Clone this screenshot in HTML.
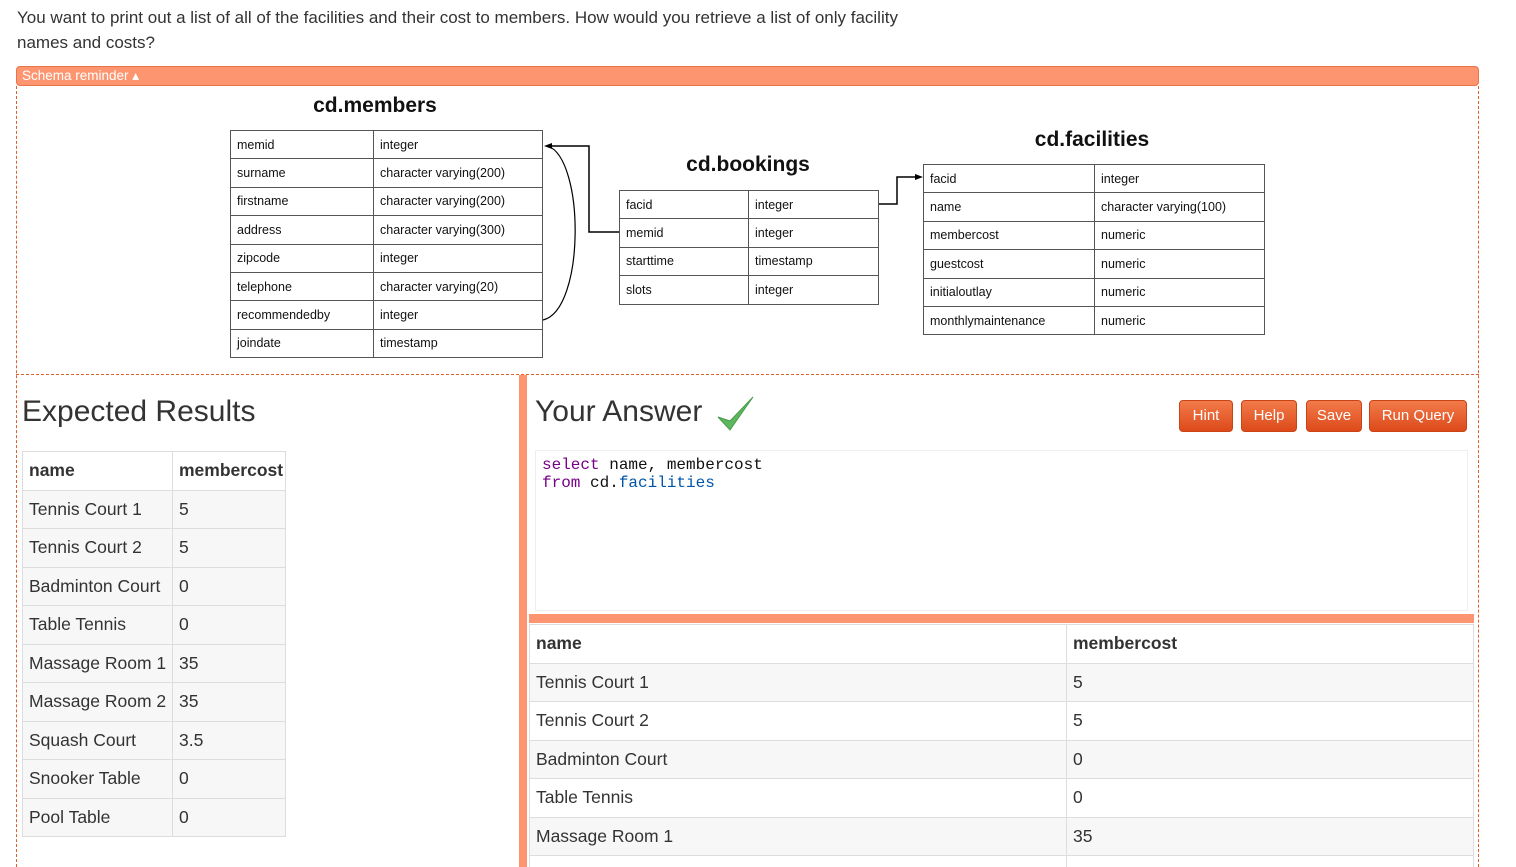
<!DOCTYPE html>
<html style="height:867px;overflow:hidden"><head><meta charset="utf-8"><style>
*{box-sizing:border-box}
body{margin:0;width:1516px;height:867px;overflow:hidden;background:#fff;font-family:"Liberation Sans",sans-serif;color:#333;position:relative}
.a{position:absolute}
.q{left:17px;top:5px;font-size:17px;line-height:25px;color:#333;width:915px}
.bar{left:16px;top:66px;width:1463px;height:20px;background:#fd9670;border:1px solid #e8744a;border-radius:4px;color:#fff;font-size:13.5px;line-height:18px;padding-left:5px}
.box{left:16px;top:86px;width:1463px;height:781px;border-left:1px dashed #e0602c;border-right:1px dashed #e0602c}
.div{left:16px;top:374px;width:1463px;border-top:1px dashed #e0602c}
table.s{position:absolute;border-collapse:collapse;font-size:12.5px;color:#111;table-layout:fixed}
table.s td{border:1px solid #555;padding:0 6px;height:28.4px;white-space:nowrap}
.t{font-weight:bold;font-size:21px;color:#111;text-align:center}
table.r{position:absolute;border-collapse:collapse;font-size:17.5px;color:#333;table-layout:fixed}
table.r td{border:1px solid #ddd;padding:0 6px;height:38.5px;white-space:nowrap;overflow:hidden}
table.r tr.h td{font-weight:bold;background:#fff}
h2{position:absolute;margin:0;font-weight:normal;font-size:30px;color:#333}
.btn{position:absolute;top:400px;height:32px;background:linear-gradient(#f27a4a,#dd4a1a);border:1px solid #c94316;border-radius:4px;color:#fff;font-size:15px;line-height:30px;text-align:center}
</style></head><body>
<div class="a q">You want to print out a list of all of the facilities and their cost to members. How would you retrieve a list of only facility names and costs?</div>
<div class="a bar">Schema reminder ▴</div>
<div class="a box"></div>
<div class="a div"></div>

<div class="a t" style="left:275px;top:94px;width:200px">cd.members</div>
<table class="s" style="left:230px;top:130px;width:313px">
<tr><td style="width:143px">memid</td><td>integer</td></tr>
<tr><td>surname</td><td>character varying(200)</td></tr>
<tr><td>firstname</td><td>character varying(200)</td></tr>
<tr><td>address</td><td>character varying(300)</td></tr>
<tr><td>zipcode</td><td>integer</td></tr>
<tr><td>telephone</td><td>character varying(20)</td></tr>
<tr><td>recommendedby</td><td>integer</td></tr>
<tr><td>joindate</td><td>timestamp</td></tr>
</table>
<div class="a t" style="left:648px;top:153px;width:200px">cd.bookings</div>
<table class="s" style="left:619px;top:190px;width:260px">
<tr><td style="width:129px">facid</td><td>integer</td></tr>
<tr><td>memid</td><td>integer</td></tr>
<tr><td>starttime</td><td>timestamp</td></tr>
<tr><td>slots</td><td>integer</td></tr>
</table>
<div class="a t" style="left:992px;top:128px;width:200px">cd.facilities</div>
<table class="s" style="left:923px;top:164px;width:342px">
<tr><td style="width:171px">facid</td><td>integer</td></tr>
<tr><td>name</td><td>character varying(100)</td></tr>
<tr><td>membercost</td><td>numeric</td></tr>
<tr><td>guestcost</td><td>numeric</td></tr>
<tr><td>initialoutlay</td><td>numeric</td></tr>
<tr><td>monthlymaintenance</td><td>numeric</td></tr>
</table>
<svg class="a" style="left:0;top:0" width="1516" height="400">
<path d="M619 232 H589 V146 H550" fill="none" stroke="#000" stroke-width="1.5"/>
<path d="M544 146 l8 -3 v6z" fill="#000"/>
<path d="M543 320 C585 310 585 160 548 146" fill="none" stroke="#000" stroke-width="1.2"/>
<path d="M879 204 H897 V177 H917" fill="none" stroke="#000" stroke-width="1.5"/>
<path d="M923 177 l-8 -3 v6z" fill="#000"/>
</svg>

<h2 style="left:22px;top:395px">Expected Results</h2>
<table class="r" style="left:22px;top:451px;width:264px">
<tr class="h"><td style="width:150px">name</td><td>membercost</td></tr>
<tr style="background:#f7f7f7"><td>Tennis Court 1</td><td>5</td></tr>
<tr style="background:#f7f7f7"><td>Tennis Court 2</td><td>5</td></tr>
<tr style="background:#f7f7f7"><td>Badminton Court</td><td>0</td></tr>
<tr style="background:#f7f7f7"><td>Table Tennis</td><td>0</td></tr>
<tr style="background:#f7f7f7"><td>Massage Room 1</td><td>35</td></tr>
<tr style="background:#f7f7f7"><td>Massage Room 2</td><td>35</td></tr>
<tr style="background:#f7f7f7"><td>Squash Court</td><td>3.5</td></tr>
<tr style="background:#f7f7f7"><td>Snooker Table</td><td>0</td></tr>
<tr style="background:#f7f7f7"><td>Pool Table</td><td>0</td></tr>
</table>

<div class="a" style="left:519px;top:375px;width:8px;height:492px;background:#fd9670"></div>

<h2 style="left:535px;top:395px">Your Answer</h2>
<svg class="a" style="left:716px;top:395px" width="40" height="38"><path d="M2 22 L14 35 L37 2 L14 26 Z" fill="#5cb85c" stroke="#4a9a4a" stroke-width="1"/></svg>
<div class="btn" style="left:1179px;width:54px">Hint</div>
<div class="btn" style="left:1241px;width:56px">Help</div>
<div class="btn" style="left:1306px;width:56px">Save</div>
<div class="btn" style="left:1369px;width:98px">Run Query</div>

<div class="a" style="left:535px;top:450px;width:933px;height:161px;border:1px solid #eee;padding:5px 6px;font-family:'Liberation Mono',monospace;font-size:16px;line-height:18px;color:#111"><span style="color:#708">select</span> name, membercost<br><span style="color:#708">from</span> cd.<span style="color:#05a">facilities</span></div>
<div class="a" style="left:529px;top:614px;width:945px;height:9px;background:#fd9670"></div>
<table class="r" style="left:529px;top:624px;width:945px">
<tr class="h"><td style="width:537px">name</td><td>membercost</td></tr>
<tr style="background:#f7f7f7"><td>Tennis Court 1</td><td>5</td></tr>
<tr><td>Tennis Court 2</td><td>5</td></tr>
<tr style="background:#f7f7f7"><td>Badminton Court</td><td>0</td></tr>
<tr><td>Table Tennis</td><td>0</td></tr>
<tr style="background:#f7f7f7"><td>Massage Room 1</td><td>35</td></tr>
<tr><td>Massage Room 2</td><td>35</td></tr>
</table>
</body></html>
